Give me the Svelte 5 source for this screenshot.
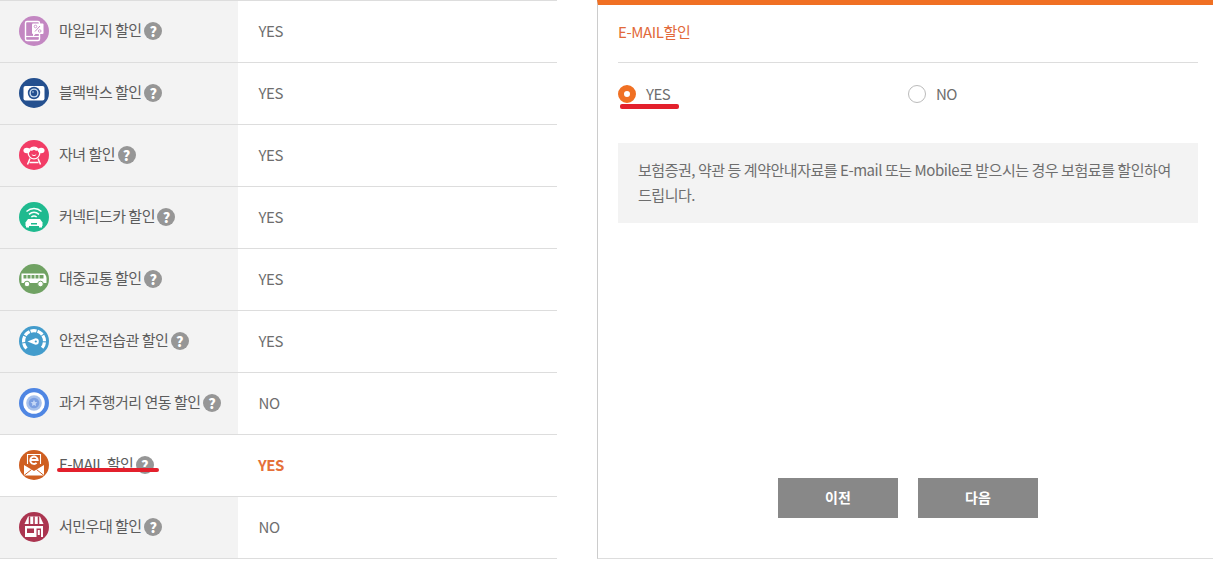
<script>
  const rows = [
    { id: 'mileage', label: '마일리지 할인', value: 'YES', color: '#c387c2' },
    { id: 'blackbox', label: '블랙박스 할인', value: 'YES', color: '#24508f' },
    { id: 'child', label: '자녀 할인', value: 'YES', color: '#f23d66' },
    { id: 'connected', label: '커넥티드카 할인', value: 'YES', color: '#1fba8f' },
    { id: 'transit', label: '대중교통 할인', value: 'YES', color: '#70a263' },
    { id: 'safe', label: '안전운전습관 할인', value: 'YES', color: '#439ccc' },
    { id: 'past', label: '과거 주행거리 연동 할인', value: 'NO', color: '#4f86e3' },
    { id: 'email', label: 'E-MAIL 할인', value: 'YES', color: '#cf5f21', active: true },
    { id: 'low', label: '서민우대 할인', value: 'NO', color: '#ab3550' }
  ];
</script>

<div class="page">
  <section class="table">
    {#each rows as row}
      <div class="row" class:active={row.active}>
        <div class="head">
          <svg class="icon" viewBox="0 0 30 30" width="30" height="30">
            <circle cx="15" cy="15" r="15" fill={row.color} />
            {#if row.id === 'mileage'}
              <rect x="6.500" y="5.500" width="14" height="19" rx="1.500" fill="none" stroke="#fff" stroke-width="1.400" />
              <line x1="7" y1="20.500" x2="20" y2="20.500" stroke="#fff" stroke-width="1.200" />
              <rect x="13" y="7.500" width="11.500" height="10.500" rx="1" fill="#fff" />
              <path d="M14 17.500v3l3-3z" fill="#fff" />
              <path d="M16 15.500l5-5.500" stroke={row.color} stroke-width="1" />
              <circle cx="16.500" cy="10.500" r="1.300" fill="none" stroke={row.color} stroke-width=".8" />
              <circle cx="20.700" cy="15" r="1.300" fill="none" stroke={row.color} stroke-width=".8" />
            {:else if row.id === 'blackbox'}
              <rect x="4.500" y="8" width="21" height="14.500" rx="2" fill="#fff" />
              <circle cx="15" cy="15" r="6.200" fill={row.color} />
              <circle cx="15" cy="15" r="4.600" fill="#cfe0f2" />
              <circle cx="15" cy="15" r="3.200" fill={row.color} />
              <circle cx="14" cy="14" r=".8" fill="#cfe0f2" />
            {:else if row.id === 'child'}
              <circle cx="15" cy="13" r="5.800" fill="none" stroke="#fff" stroke-width="1.300" />
              <ellipse cx="7.800" cy="10.500" rx="3.300" ry="2.700" fill="#fff" />
              <ellipse cx="22.200" cy="10.500" rx="3.300" ry="2.700" fill="#fff" />
              <path d="M9.500 10c2.500-3.500 8.500-3.500 11 0-2 1-3.800 1-5.500-.3-1.700 1.300-3.500 1.300-5.500.3z" fill="#fff" />
              <path d="M12.800 14.500c1 1.400 3.400 1.400 4.400 0" fill="none" stroke="#fff" stroke-width="1" />
              <path d="M11 18.500l-2.500 6M19 18.500l2.500 6M10.500 22.500h9" stroke="#fff" stroke-width="1.500" fill="none" />
            {:else if row.id === 'connected'}
              <path d="M7.500 9.500c4.500-4 10.500-4 15 0M10 12.300c3-2.500 7-2.500 10 0M12.300 15c1.500-1 3.900-1 5.400 0" fill="none" stroke="#fff" stroke-width="1.500" />
              <path d="M6.500 20.500l2.500-3.500h12l2.500 3.500v3.500h-17z" fill="#fff" />
              <rect x="7" y="24" width="3" height="1.500" fill="#fff" />
              <rect x="20" y="24" width="3" height="1.500" fill="#fff" />
              <rect x="12" y="21" width="6" height="1.500" fill={row.color} />
            {:else if row.id === 'transit'}
              <path d="M2.500 9.500h22c1.500 0 2.500 2 3 4.500v5h-25z" fill="#fff" />
              <g fill={row.color}>
                <rect x="4.500" y="11" width="3" height="3.500" /><rect x="8.500" y="11" width="3" height="3.500" />
                <rect x="12.500" y="11" width="3" height="3.500" /><rect x="16.500" y="11" width="3" height="3.500" />
                <rect x="20.500" y="11" width="4" height="3.500" />
              </g>
              <circle cx="8" cy="20" r="2.800" fill="#fff" stroke={row.color} />
              <circle cx="21.500" cy="20" r="2.800" fill="#fff" stroke={row.color} />
            {:else if row.id === 'safe'}
              <path d="M7.500 22.500a10.500 10.500 0 1 1 15 0" fill="none" stroke="#fff" stroke-width="3.200" stroke-dasharray="6 1" />
              <path d="M8.500 15.500l8-3.300a3.300 3.300 0 1 1 0 6.600z" fill="#fff" />
              <circle cx="16.800" cy="15.500" r="1.100" fill={row.color} />
            {:else if row.id === 'past'}
              <circle cx="15" cy="15" r="10.800" fill="#fff" />
              <circle cx="15" cy="15" r="7.800" fill="#a7c1ec" />
              <circle cx="15" cy="15" r="5.300" fill="#7b9fe2" />
              <path d="M15 11.800l1 2.200 2.300.2-1.700 1.600.5 2.300-2.100-1.200-2.100 1.200.5-2.300-1.700-1.600 2.300-.2z" fill="#c6d8f6" />
            {:else if row.id === 'email'}
              <path d="M8.500 14V4.500h13V14" fill="none" stroke="#fff" stroke-width="1.100" />
              <path d="M11.300 10h7.400a3.700 3.700 0 1 0-1.100 2.900" fill="none" stroke="#fff" stroke-width="1.900" />
              <path d="M5 15l10 6 10-6v10.500H5z" fill="#fff" />
              <path d="M5 25.500l7.500-6M25 25.500l-7.500-6" stroke={row.color} stroke-width="1" />
            {:else if row.id === 'low'}
              <path d="M9 4.500h12l3.500 7.500h-19z" fill="#fff" />
              <path d="M10.500 4.500v7.500M15 4.500v7.500M19.500 4.500v7.500" stroke={row.color} stroke-width="1.500" />
              <path d="M6 14h18v11H6z" fill="#fff" />
              <rect x="8" y="16.500" width="7" height="4.500" fill={row.color} />
              <rect x="17.500" y="16.500" width="4.500" height="8.500" fill={row.color} />
              <rect x="18.800" y="18" width="2" height="5" fill="#fff" />
            {/if}
          </svg>
          <span class="label">{row.label}</span>
          <span class="help">?</span>
          {#if row.active}<i class="mark mark-row"></i>{/if}
        </div>
        <div class="value">{row.value}</div>
      </div>
    {/each}
  </section>

  <section class="panel">
    <h2>E-MAIL할인</h2>
    <div class="options">
      <div class="option">
        <span class="radio on"></span><span class="opt-text">YES</span>
        <i class="mark mark-radio"></i>
      </div>
      <div class="option">
        <span class="radio"></span><span class="opt-text">NO</span>
      </div>
    </div>
    <p class="note">보험증권, 약관 등 계약안내자료를 E-mail 또는 Mobile로 받으시는 경우 보험료를 할인하여 드립니다.</p>
    <div class="actions">
      <button>이전</button>
      <button>다음</button>
    </div>
  </section>
</div>

<style>
  :global(body) { margin: 0; background: #fff; }
  .page {
    display: flex;
    gap: 40px;
    width: 1213px;
    height: 561px;
    overflow: hidden;
    font-family: "Noto Sans CJK KR", "Noto Sans", sans-serif;
    color: #666;
    font-size: 15px;
    letter-spacing: -0.5px;
  }
  .table {
    width: 557px;
    flex: none;
    align-self: flex-start;
    border-top: 1px solid #ddd;
  }
  .row {
    display: flex;
    height: 61px;
    border-bottom: 1px solid #ddd;
  }
  .head {
    position: relative;
    width: 238px;
    flex: none;
    box-sizing: border-box;
    padding: 0 0 2px 19px;
    display: flex;
    align-items: center;
    background: #f3f3f3;
    color: #5c5c5c;
    line-height: 20px;
  }
  .row.active .head { background: #fff; }
  .icon { flex: none; margin-right: 10px; }
  .label { position: relative; top: -1px; white-space: nowrap; }
  .help {
    flex: none;
    width: 18px;
    height: 18px;
    margin-left: 2.500px;
    border-radius: 50%;
    background: #969696;
    color: #fff;
    font-size: 14px;
    font-weight: 900;
    line-height: 18px;
    text-align: center;
    letter-spacing: 0;
  }
  .value { padding-left: 20.500px; line-height: 60px; color: #6e6e6e; font-size: 15px; letter-spacing: -0.400px; }
  .row.active .value { color: #e5703a; font-weight: 700; letter-spacing: -0.500px; padding-left: 20px; }
  .mark {
    position: absolute;
    display: block;
    height: 4px;
    border-radius: 2px;
    background: #e3202c;
  }
  .mark-row { left: 57px; top: 33px; width: 102px; }
  .panel {
    width: 616px;
    height: 559px;
    flex: none;
    box-sizing: border-box;
    padding: 0 15px 0 20px;
    border-left: 1px solid #ccc;
    border-bottom: 1px solid #ddd;
    border-top: 5px solid #f07023;
    display: flex;
    flex-direction: column;
  }
  h2 {
    margin: 0;
    height: 58px;
    box-sizing: border-box;
    padding-top: 16px;
    font-size: 15px;
    font-weight: 400;
    line-height: 22px;
    letter-spacing: -0.400px;
    color: #e2693a;
    border-bottom: 1px solid #ddd;
  }
  .options { display: flex; margin-top: 20px; height: 22px; }
  .option {
    position: relative;
    display: flex;
    align-items: center;
    width: 290px;
    gap: 10px;
    font-size: 15px;
    color: #6e6e6e;
  }
  .opt-text { position: relative; top: -1px; }
  .radio {
    box-sizing: border-box;
    width: 18px;
    height: 18px;
    border-radius: 50%;
    border: 1px solid #bbb;
    background: #fff;
    flex: none;
  }
  .radio.on { border: 6px solid #f07023; }
  .mark-radio { left: 2px; top: 21px; width: 59px; height: 4.500px; }
  .note {
    margin: 38px 0 0;
    padding: 14px 20px 16px;
    height: 80px;
    box-sizing: border-box;
    background: #f3f3f3;
    font-size: 15px;
    line-height: 25px;
    color: #6e6e6e;
    letter-spacing: -0.460px;
  }
  .actions {
    display: flex;
    justify-content: center;
    gap: 20px;
    margin-top: 255px;
  }
  button {
    width: 120px;
    height: 40px;
    border: 0;
    padding: 0 0 3px;
    background: #888;
    color: #fff;
    font: 700 14px "Noto Sans CJK KR", sans-serif;
  }
</style>
